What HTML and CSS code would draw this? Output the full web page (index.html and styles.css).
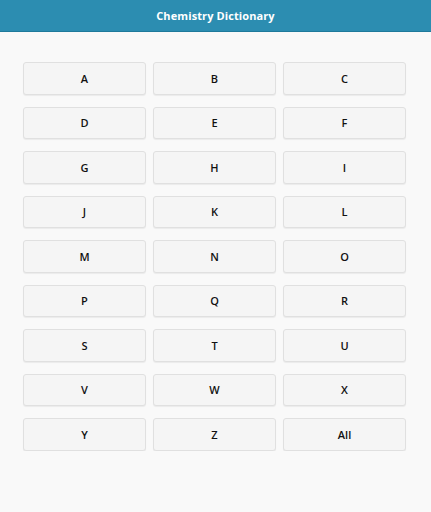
FILE: index.html
```html
<!DOCTYPE html>
<html>
<head>
<meta charset="utf-8">
<link rel="stylesheet" href="styles.css">
</head>
<body>
<header class="bar">Chemistry Dictionary</header>
<main class="grid">
<button class="key">A</button><button class="key">B</button><button class="key">C</button>
<button class="key">D</button><button class="key">E</button><button class="key">F</button>
<button class="key">G</button><button class="key">H</button><button class="key">I</button>
<button class="key">J</button><button class="key">K</button><button class="key">L</button>
<button class="key">M</button><button class="key">N</button><button class="key">O</button>
<button class="key">P</button><button class="key">Q</button><button class="key">R</button>
<button class="key">S</button><button class="key">T</button><button class="key">U</button>
<button class="key">V</button><button class="key">W</button><button class="key">X</button>
<button class="key">Y</button><button class="key">Z</button><button class="key">All</button>
</main>
</body>
</html>
```
FILE: styles.css
```css
html, body {
  margin: 0;
  padding: 0;
  background: #f9f9f9;
  font-family: "Open Sans", "DejaVu Sans", sans-serif;
}
.bar {
  height: 31px;
  line-height: 31px;
  background: #2c8db1;
  border-bottom: 1px solid #1f7a9b;
  color: #ffffff;
  text-align: center;
  font-weight: 700;
  font-size: 11px;
  letter-spacing: 0.1px;
}
.grid {
  display: grid;
  grid-template-columns: repeat(3, 1fr);
  grid-auto-rows: 32.5px;
  column-gap: 7px;
  row-gap: 12px;
  padding: 30px 25px 0 23px;
}
.key {
  margin: 0;
  padding: 0;
  background: #f5f5f5;
  border: 1px solid #e0e0e0;
  border-radius: 3px;
  box-shadow: 0 1px 1px rgba(0,0,0,0.06);
  color: #111;
  font-family: "Open Sans", "DejaVu Sans", sans-serif;
  font-weight: 600;
  font-size: 11px;
}
```
